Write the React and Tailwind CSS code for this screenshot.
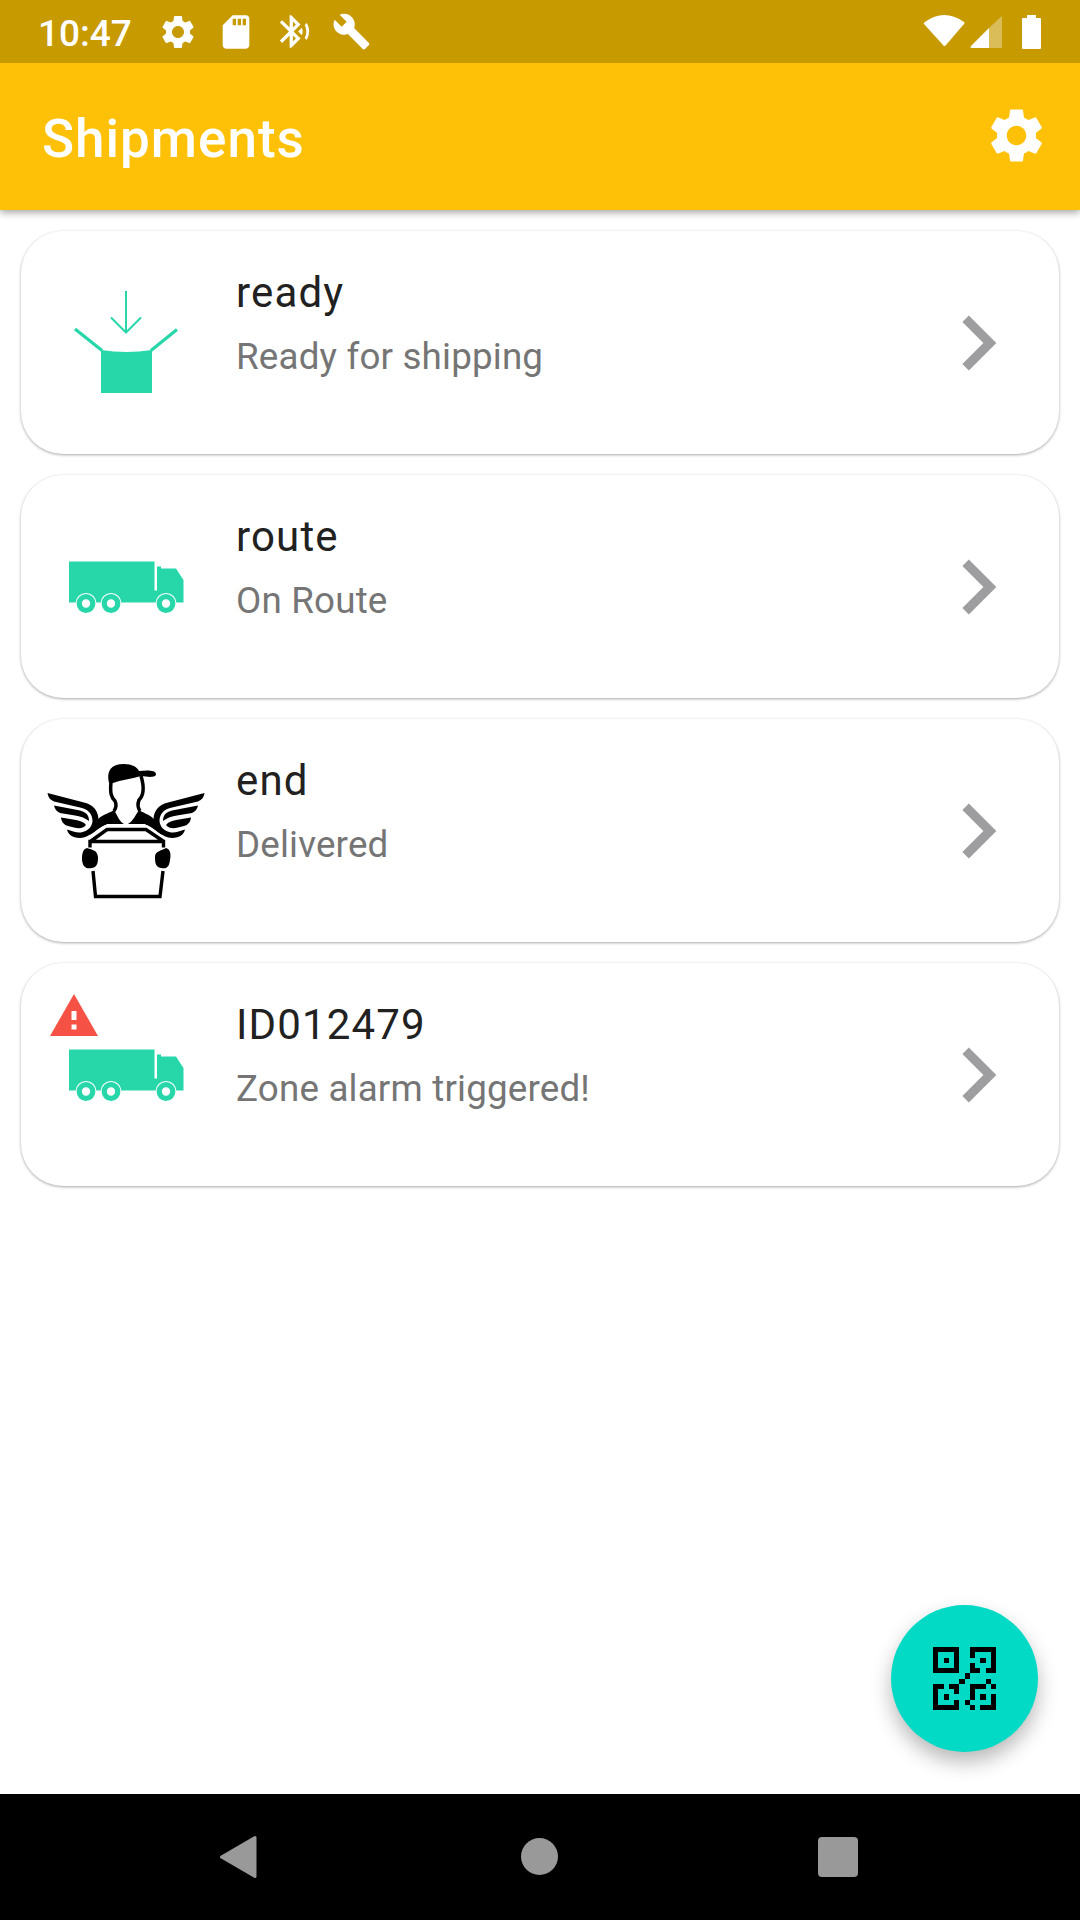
import { MdSettings, MdBuild, MdSdCard, MdBluetoothAudio, MdNavigateNext } from 'react-icons/md';

// 12x12 modules of the QR symbol on the scan button
const qrRows = [
    '11111..11111',
    '1...1..1...1',
    '1.1.1....1.1',
    '1...1..1...1',
    '11111..11.11',
    '......1.....',
    '.....1....1.',
    '11.11..111.1',
    '1...1..1....',
    '1.1....1.1.1',
    '1...1.1....1',
    '11111..1.111',
];

const shipments = [
    { title: 'ready', subtitle: 'Ready for shipping', icon: 'box' },
    { title: 'route', subtitle: 'On Route', icon: 'truck' },
    { title: 'end', subtitle: 'Delivered', icon: 'courier' },
    { title: 'ID012479', subtitle: 'Zone alarm triggered!', icon: 'truck', alarm: true },
];

const BoxIcon = () => (
    <svg viewBox="0 0 168 168" className="w-[168px] h-[168px]">
        <path d="M59 91 Q84 95 110 91 V134 H59 Z" fill="#27d7aa" />
        <path d="M33 70 L60 91.500 M109 91.500 L135 70.500" stroke="#27d7aa" strokeWidth="3.2" fill="none" />
        <path d="M84 32 V73 M69 58.500 L84 73.500 L99 58.500" stroke="#27d7aa" strokeWidth="2" fill="none" />
    </svg>
);

const TruckIcon = () => (
    <svg viewBox="0 0 168 168" className="w-[168px] h-[168px]">
        <path d="M27 58.500 H112.500 V87.500 H115 V63.500 H119 V65.500 H134 L141.500 77 V99.500 H27 Z" fill="#27d7aa" />
        {[44, 69, 124].map((cx) => (
            <g key={cx}>
                <circle cx={cx} cy="100.5" r="10.5" fill="#fff" />
                <circle cx={cx} cy="100.5" r="6.8" fill="#fff" stroke="#27d7aa" strokeWidth="5.2" />
            </g>
        ))}
    </svg>
);

// Half of the wings; mirrored for the other side
const Wing = () => (
    <g>
        <path d="M17.500 53 L54 62.500 C64 65 68 71 68.500 79 L77 84 C68 87 60 98 50 98 C42 98 38 94 37 89.500 C42 91 46 93 51 92.500 C58 91 62 87 62.500 81 C62.500 74 58 69 50 67.500 L24 61.500 C20 60 18 57 17.500 53 Z" />
        <path d="M24 65.500 L50 70.500 C56 72 59 75 59 81 C55 78 50 76 45 75.500 L33 73.500 C28 73 25 70 24 65.500 Z" />
        <path d="M31 77.500 L46 80 C50 81 54 82 56 85 C53 89 48 88.500 44 87.500 L38 86 C34 85 31.500 82 31 77.500 Z" />
    </g>
);

const CourierIcon = () => (
    <svg viewBox="1 1 190 180" className="w-[190px] h-[180px]">
        <Wing />
        <g transform="translate(192 0) scale(-1 1)">
            <Wing />
        </g>
        <path d="M79 43 C76 31 81 24 94 24 C102 24 107 27 109 31 C117 30 126 30 126 34 C126 38 118 37 111 36 C101 39 91 40 83 43 Z" />
        <path d="M81 42 C80 53 81 57 85 61 C87 65 86 68 84 71 M111 36 C115 49 113 56 109 60 C107 65 108 68 110 71" fill="none" stroke="#000" strokeWidth="3.5" />
        <path d="M84 70 C78 74 70 75 67 81 L60 95 C65 91 71 86 77 84 L94 84 C90 82 88 77 84 70 Z M109 70 C115 74 122 75 125 81 L132 95 C127 91 121 86 115 84 L98 84 C103 81 105 76 109 70 Z" />
        <path d="M61 101 L77 89.500 H116 L133 101 M60 107.500 V101.500 H133.500 V107.500 M63 131 L65.500 156.500 H130 L133 131" fill="none" stroke="#000" strokeWidth="3.4" />
        <path d="M57 108 C52 109 52 116 52 120 C53 128 57 129 62 128 C68 127 68 121 68 117 C67 110 63 110 57 108 Z M136 108 C141 109 141 116 140 120 C139 128 136 129 131 128 C125 127 125 121 125 117 C125 111 131 111 136 108 Z" />
    </svg>
);

const ShipmentIcon = ({ name }) => {
    if (name === 'box') return <BoxIcon />;
    if (name === 'truck') return <TruckIcon />;
    return <CourierIcon />;
};

const StatusBar = () => (
    <div className="relative z-10 h-[63px] bg-[#c79a00] flex items-center justify-between text-white">
        <div className="flex items-center pl-[38px]">
            <span className="w-[92px] text-[37px] leading-none font-medium pt-[3px]">10:47</span>
            <MdSettings className="w-[40px] h-[40px] ml-7" />
            <MdSdCard className="w-[40px] h-[40px] ml-[18px]" />
            <MdBluetoothAudio className="w-[39px] h-[39px] ml-[19px]" />
            <MdBuild className="w-[39px] h-[39px] ml-[18px]" />
        </div>
        <svg viewBox="0 0 120 36" className="w-[120px] h-[36px] mr-[38px]" fill="#fff">
            <path d="M3 8 Q22 -6 42 8 Q43 9 42 10 L24 31 Q22.500 33 21 31 L2 10 Q1 9 3 8 Z" />
            <path d="M49 34 Q48 33 49 32 L67 14 V34 Z" />
            <path d="M67 14 L80 2 V34 H67 Z" opacity="0.35" />
            <path d="M105 1 H114 V4 H118 Q119 4 119 5 V34 Q119 35 118 35 H101 Q100 35 100 34 V5 Q100 4 101 4 H105 Z" />
        </svg>
    </div>
);

const ShipmentCard = ({ title, subtitle, icon, alarm }) => (
    <div className="relative h-[223px] rounded-[42px] bg-white shadow-[0_1px_3px_rgba(0,0,0,0.35)] flex items-center">
        <div className="w-[210px] h-full shrink-0 flex items-center justify-center">
            <ShipmentIcon name={icon} />
        </div>
        {alarm && (
            <svg viewBox="0 0 48 42" className="absolute left-[28.5px] top-[31px] w-[48px] h-[42px]">
                <path d="M24 0 L48 42 H0 Z" fill="#f55145" />
                <path d="M21.500 17 h5 v9 h-5 Z M21.500 30.500 h5 v5 h-5 Z" fill="#fff" />
            </svg>
        )}
        <div className="flex-1 h-full pl-[5px] pt-[37px]">
            <h2 className="text-[42px] leading-[49px] tracking-[1.15px] text-[#212121]">{title}</h2>
            <p className="mt-[18px] text-[36.75px] leading-[43px] tracking-[0.18px] text-[#757575]">{subtitle}</p>
        </div>
        <MdNavigateNext className="w-[110px] h-[110px] mr-[26px] text-[#9e9ea0]" />
    </div>
);

const App = () => {
    return (
        <div className="w-[1080px] h-[1920px] flex flex-col bg-white overflow-hidden font-['Roboto',sans-serif]">
            <StatusBar />
            <header className="h-[147px] bg-[#ffc107] shadow-[0_2px_8px_rgba(0,0,0,0.4)] flex items-center justify-between pl-[42px] pr-[31px]">
                <h1 className="pt-[5px] text-[53px] leading-none font-medium tracking-[1px] text-white">Shipments</h1>
                <MdSettings className="w-[65px] h-[65px] mb-0.5 text-white" />
            </header>

            <main className="relative flex-1 px-[21px] pt-[21px] flex flex-col gap-[21px]">
                {shipments.map((item) => (
                    <ShipmentCard key={item.title} {...item} />
                ))}

                {/* Scan button floats over the list */}
                <button className="absolute right-[42px] bottom-[42px] w-[147px] h-[147px] rounded-full bg-[#03dac5] shadow-[0_10px_20px_rgba(0,0,0,0.28)] flex items-center justify-center">
                    <svg viewBox="0 0 12 12" className="w-[63px] h-[63px]" shapeRendering="crispEdges">
                        {qrRows.map((row, y) =>
                            [...row].map((cell, x) => cell === '1' && <rect key={`${x}-${y}`} x={x} y={y} width="1" height="1" />)
                        )}
                    </svg>
                </button>
            </main>

            <nav className="h-[126px] bg-black flex items-center justify-between pl-[219px] pr-[222px] pb-px">
                <svg viewBox="0 0 38 44" className="w-[38px] h-[44px]">
                    <path d="M36 2.500 V41.500 L2.500 22 Z" fill="#999" stroke="#999" strokeWidth="3" strokeLinejoin="round" />
                </svg>
                <div className="w-[37px] h-[37px] ml-[3px] rounded-full bg-[#999]"></div>
                <div className="w-[40px] h-[40px] rounded-[4px] bg-[#999]"></div>
            </nav>
        </div>
    );
};

export default App;
